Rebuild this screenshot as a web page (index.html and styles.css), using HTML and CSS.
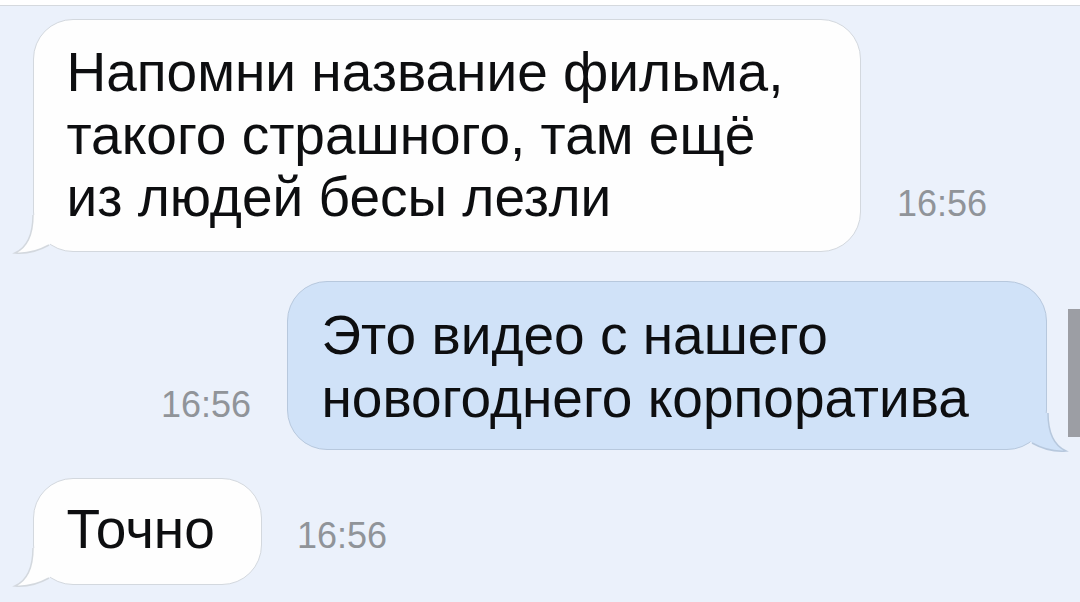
FILE: index.html
```html
<!DOCTYPE html>
<html lang="ru">
<head>
<meta charset="utf-8">
<title>Чат</title>
<link rel="stylesheet" href="styles.css">
</head>
<body>
<div class="topbar"></div>
<div class="chat">
  <div class="row in-row">
    <div class="bubble in b1">Напомни название фильма,<br>такого страшного, там ещё<br>из людей бесы лезли<svg class="tail" viewBox="0 0 62 60" width="62" height="60"><path class="tail-fill" d="M20,22 C20,44 13,55 2,60 C14,61 27,57 36,52 L38.5,49.5 L27,36.5 L23,22 Z"/><path class="tail-line" d="M20,22 C20,44 13,55 2,60 C14,61 27,57 36,52"/></svg></div>
    <div class="time">16:56</div>
  </div>
  <div class="row out-row">
    <div class="time">16:56</div>
    <div class="bubble out b2">Это видео с нашего<br>новогоднего корпоратива<svg class="tail" viewBox="0 0 62 60" width="62" height="60"><path class="tail-fill" d="M20,22 C20,44 13,55 2,60 C14,61 27,57 36,52 L38.5,49.5 L27,36.5 L23,22 Z"/><path class="tail-line" d="M20,22 C20,44 13,55 2,60 C14,61 27,57 36,52"/></svg></div>
  </div>
  <div class="row in-row last">
    <div class="bubble in b3">Точно<svg class="tail" viewBox="0 0 62 60" width="62" height="60"><path class="tail-fill" d="M20,22 C20,44 13,55 2,60 C14,61 27,57 36,52 L38.5,49.5 L27,36.5 L23,22 Z"/><path class="tail-line" d="M20,22 C20,44 13,55 2,60 C14,61 27,57 36,52"/></svg></div>
    <div class="time">16:56</div>
  </div>
</div>
<div class="scrollmark"></div>
</body>
</html>
```
FILE: styles.css
```css
* { box-sizing: border-box; }
html, body {
  margin: 0;
  width: 1080px;
  height: 602px;
  overflow: hidden;
}
body {
  position: relative;
  background: #ebf1fb;
  font-family: "Liberation Sans", Arial, sans-serif;
}
.topbar {
  height: 7px;
  background: #ffffff;
  border-bottom: 1px solid #d5d9de;
  margin-top: -1px;
}
.chat {
  display: flex;
  flex-direction: column;
  padding: 13px 33px 0 33px;
}
.row {
  display: flex;
  align-items: last baseline;
  gap: 36px;
}
.out-row {
  justify-content: flex-end;
  margin-top: 29px;
}
.last {
  margin-top: 28px;
  gap: 35px;
}
.bubble {
  position: relative;
  border: 1.5px solid;
  border-radius: 40px;
  font-size: 55px;
  line-height: 62.5px;
  color: #0d0e10;
  white-space: nowrap;
}
.bubble.in {
  background: #fefefe;
  border-color: #d3d8de;
}
.bubble.out {
  background: #d0e2f8;
  border-color: #b7c8dd;
}
.b1 {
  width: 828px;
  padding: 21px 30px 22.5px 32.5px;
}
.b2 {
  width: 760px;
  padding: 22px 30px 20px 33.5px;
}
.b3 {
  width: 229px;
  padding: 19px 20px 23.5px 32.5px;
}
.tail {
  position: absolute;
  left: -21.5px;
  bottom: -1.5px;
  overflow: visible;
}
.out .tail {
  left: auto;
  right: -21.5px;
  transform: scaleX(-1);
}
.tail-line {
  fill: none;
  stroke-width: 1.5;
}
.in .tail-fill { fill: #fefefe; }
.in .tail-line { stroke: #d3d8de; }
.out .tail-fill { fill: #d0e2f8; }
.out .tail-line { stroke: #b7c8dd; }
.time {
  font-size: 36px;
  line-height: 36px;
  color: #909499;
}
.scrollmark {
  position: absolute;
  left: 1068px;
  top: 309px;
  width: 12px;
  height: 128px;
  background: #9c9ea4;
}
```
